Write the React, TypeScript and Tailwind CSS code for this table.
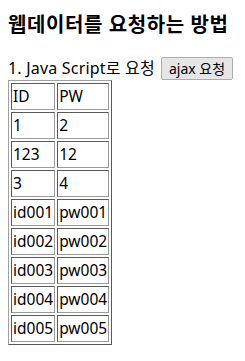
import React from "react";

const rows: [string, string][] = [
  ["ID", "PW"],
  ["1", "2"],
  ["123", "12"],
  ["3", "4"],
  ["id001", "pw001"],
  ["id002", "pw002"],
  ["id003", "pw003"],
  ["id004", "pw004"],
  ["id005", "pw005"],
];

const cell =
  "h-[27px] p-[1px] border border-t-[#5a5a5a] border-l-[#5a5a5a] border-r-[#9a9a9a] border-b-[#9a9a9a] text-[15.5px] leading-[21px] text-black align-middle whitespace-nowrap";

export default function App() {
  return (
    <div
      className="w-[245px] h-[361px] bg-white pl-2 pt-[14px] text-black"
      style={{ fontFamily: '"Noto Sans", "Noto Sans CJK KR", sans-serif' }}
    >
      <h3 className="h-[22px] text-[20px] leading-[22px] font-bold tracking-[0.6px] whitespace-nowrap">
        웹데이터를 요청하는 방법
      </h3>
      <div className="mt-[21px] h-[23px] flex items-center text-[16px] leading-[21px] tracking-[0.2px] whitespace-nowrap">
        <span>1. Java Script로 요청</span>
        <button className="ml-[6px] h-[23px] px-[7px] border border-[#adadad] rounded-[2px] bg-[#e6e6e6] text-[14px] leading-[16px] tracking-normal text-black">
          ajax 요청
        </button>
      </div>
      <table className="border-separate border-spacing-[2px] border border-t-[#a0a0a0] border-l-[#a0a0a0] border-r-[#5a5a5a] border-b-[#5a5a5a]">
        <tbody>
          {rows.map(([a, b]) => (
            <tr key={a}>
              <td className={cell + " w-[42px]"}>{a}</td>
              <td className={cell + " w-[47px]"}>{b}</td>
            </tr>
          ))}
        </tbody>
      </table>
    </div>
  );
}
